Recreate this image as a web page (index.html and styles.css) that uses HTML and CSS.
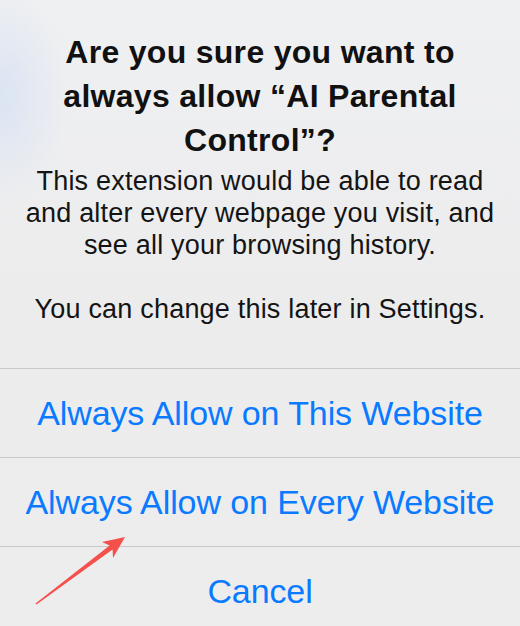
FILE: index.html
```html
<!DOCTYPE html>
<html lang="en">
<head>
<meta charset="utf-8">
<title>Allow extension</title>
<link rel="stylesheet" href="styles.css">
</head>
<body>
<div class="sheet">
  <div class="message">
    <h1 class="title">Are you sure you want to always allow “AI Parental Control”?</h1>
    <p class="body">This extension would be able to read and alter every webpage you visit, and see all your browsing history.</p>
    <p class="body second">You can change this later in Settings.</p>
  </div>
  <div class="actions">
    <div class="action">Always Allow on This Website</div>
    <div class="action">Always Allow on Every Website</div>
    <div class="action">Cancel</div>
  </div>
  <svg class="arrow" viewBox="0 0 520 626" width="520" height="626" aria-hidden="true">
    <path d="M35.5 603.4 L109.6 545.5 L102 542 L125 537 L113 558 L112.6 549.5 L36.5 604.6 Z" fill="#f4514d"/>
  </svg>
</div>
</body>
</html>
```

FILE: styles.css
```css
html, body {
  margin: 0;
  padding: 0;
}
body {
  width: 520px;
  height: 626px;
  overflow: hidden;
  background: #ececed;
  font-family: "Liberation Sans", Arial, sans-serif;
}
.sheet {
  position: relative;
  width: 520px;
  height: 626px;
  background:
    radial-gradient(ellipse 70px 110px at 0px 95px, rgba(214, 225, 244, 0.8), rgba(214, 225, 244, 0) 100%),
    linear-gradient(180deg, #eff0f2 0%, #ececed 50%, #ededee 100%);
}
.message {
  padding: 30px 20px 43px;
  text-align: center;
  color: #0b0b0b;
}
.title {
  margin: 0;
  font-size: 32px;
  line-height: 44px;
  font-weight: 700;
  letter-spacing: 0.3px;
  padding: 0 10px;
  color: #111;
}
.body {
  margin: 3px 0 0;
  font-size: 27px;
  line-height: 32px;
  font-weight: 400;
  letter-spacing: 0.2px;
  color: #141414;
}
.body.second {
  margin-top: 32px;
}
.actions {
  display: flex;
  flex-direction: column;
}
.action {
  height: 88px;
  border-top: 1px solid #c8c8ca;
  display: flex;
  align-items: center;
  justify-content: center;
  color: #0a7aff;
  font-size: 34px;
  letter-spacing: -0.1px;
  white-space: nowrap;
}
.arrow {
  position: absolute;
  left: 0;
  top: 0;
  pointer-events: none;
}
```
